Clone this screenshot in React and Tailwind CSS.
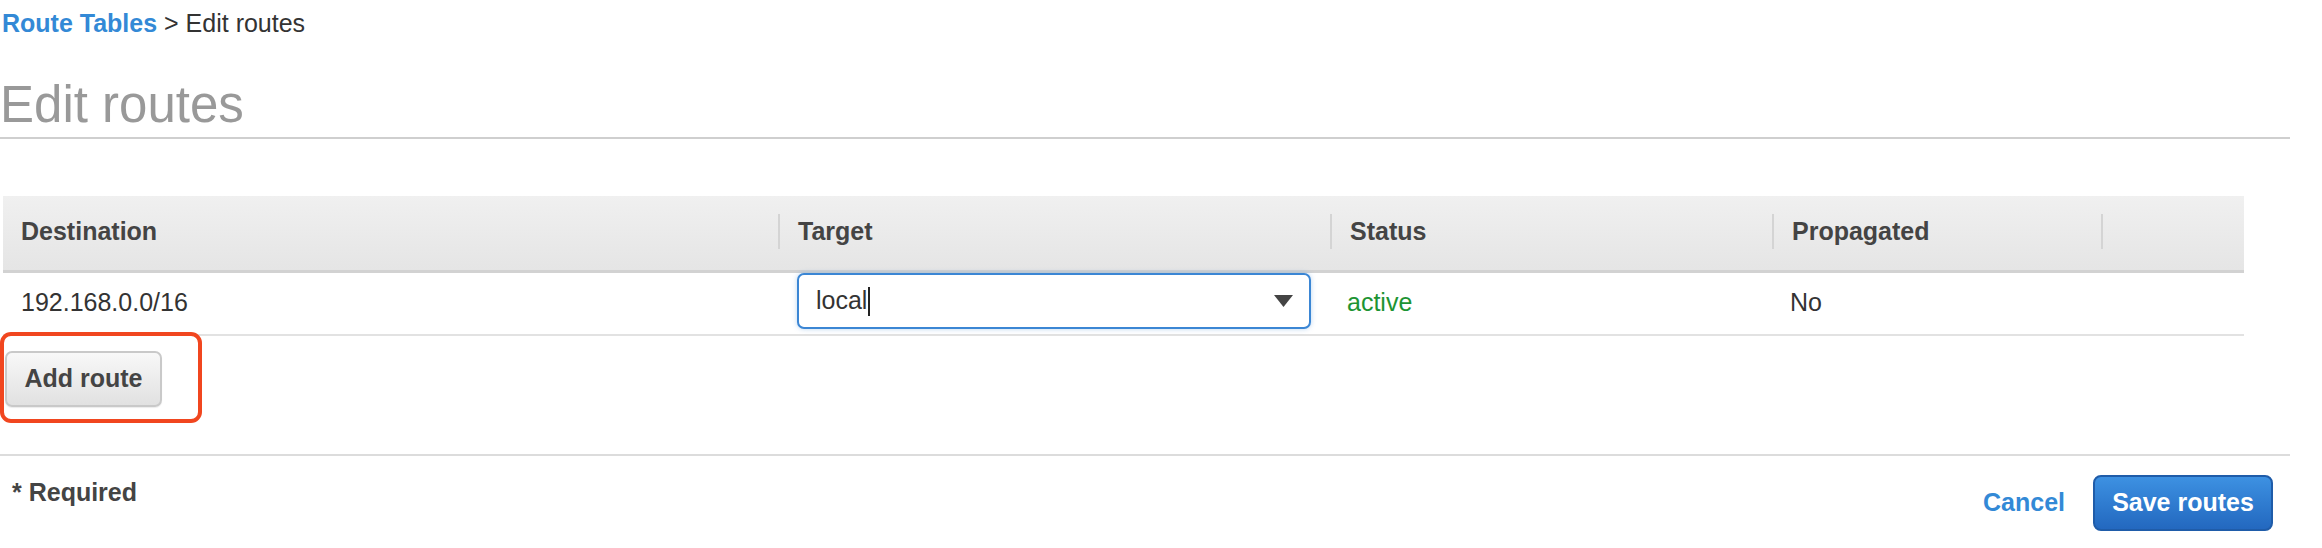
import React from 'react';

const cols = 'grid grid-cols-[775px_552px_442px_329px_143px]';

function HeaderCell({ label, first }) {
  return (
    <div className="flex items-center h-full">
      {!first && <div className="w-[2px] h-[35px] bg-[#d4d4d4]" />}
      {label && <span className="pl-[18px]">{label}</span>}
    </div>
  );
}

function App() {
  return (
    <div className="w-[2290px] min-h-[548px] bg-white text-[25px] text-[#333] font-['Liberation_Sans',Arial,sans-serif]">
      {/* Breadcrumb */}
      <div className="pt-[9px] pl-[2px] leading-[29px]">
        <span className="font-bold text-[#3389d6]">Route Tables</span>
        <span className="text-[#333]"> &gt; Edit routes</span>
      </div>

      {/* Title */}
      <h1 className="mt-[41px] pb-[7px] text-[51px] leading-[51px] text-[#999] border-b-2 border-[#cfcfcf]">
        Edit routes
      </h1>

      {/* Routes table */}
      <div className="ml-[3px] mt-[57px] w-[2241px]">
        <div className={`${cols} h-[77px] pb-[3px] font-bold text-[#444] bg-linear-to-b from-[#f0f0f0] to-[#e5e5e5] border-b-[3px] border-[#d2d2d2]`}>
          <HeaderCell label="Destination" first />
          <HeaderCell label="Target" />
          <HeaderCell label="Status" />
          <HeaderCell label="Propagated" />
          <HeaderCell label="" />
        </div>
        <div className={`${cols} h-[63px] items-start border-b-2 border-[#e2e2e2]`}>
          <div className="pl-[18px] pt-[11px]">192.168.0.0/16</div>
          <div className="px-[19px]">
            <div className="flex items-center justify-between h-[56px] pl-[17px] pr-[16px] rounded-[7px] border-2 border-[#3b86d4] shadow-[0_0_5px_rgba(59,134,212,0.35)] bg-white">
              <span className="flex items-center">
                local
                <span className="ml-[1px] w-[2px] h-[29px] bg-[#222]" />
              </span>
              <svg width="19" height="12" viewBox="0 0 19 12">
                <path d="M0 0 L19 0 L9.5 12 Z" fill="#444" />
              </svg>
            </div>
          </div>
          <div className="pl-[17px] pt-[11px] text-[#1d9433]">active</div>
          <div className="pl-[18px] pt-[11px]">No</div>
          <div />
        </div>
      </div>

      {/* Add route (highlighted) */}
      <div className="-mt-[4px] w-[202px] h-[91px] border-4 border-[#f1461f] rounded-[11px] pt-[15px] pl-[1px]">
        <button className="w-[157px] h-[56px] rounded-[7px] border-2 border-[#c9c9c9] bg-linear-to-b from-[#f8f8f8] to-[#e1e1e1] font-bold text-[#444] shadow-[0_1px_1px_rgba(0,0,0,0.08)]">
          Add route
        </button>
      </div>

      {/* Footer */}
      <div className="mt-[31px] border-t-2 border-[#dcdcdc] flex justify-between items-start pt-[19px] pl-[12px] pr-[17px]">
        <div className="mt-[3px] leading-[28px] font-bold text-[#444]">* Required</div>
        <div className="flex items-center gap-[28px]">
          <a className="font-bold text-[#3389d6] cursor-pointer">Cancel</a>
          <button className="w-[180px] h-[56px] rounded-[8px] border-2 border-[#1f5ca9] bg-linear-to-b from-[#3d91e2] to-[#2368bf] font-bold text-white">
            Save routes
          </button>
        </div>
      </div>
    </div>
  );
}

export default App;
